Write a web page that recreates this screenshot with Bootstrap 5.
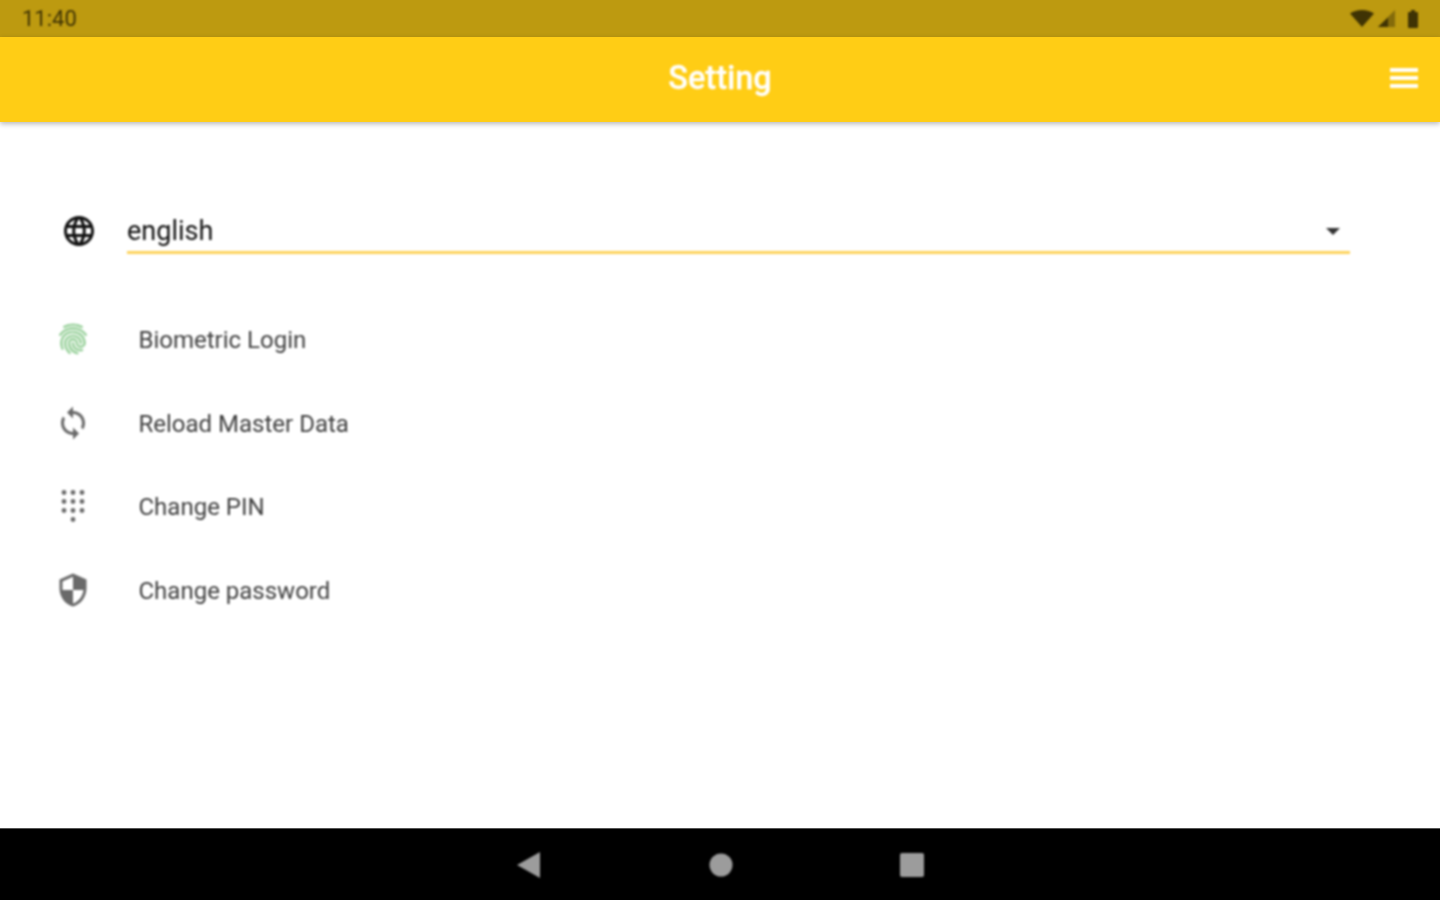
<!DOCTYPE html>
<html lang="en">
<head>
<meta charset="UTF-8">
<meta name="viewport" content="width=device-width, initial-scale=1.0">
<title>Setting</title>
<link href="https://cdn.jsdelivr.net/npm/bootstrap@5.3.3/dist/css/bootstrap.min.css" rel="stylesheet"/>
<style>
  body { font-family: Roboto, "Liberation Sans", sans-serif; background: #fff; }
  .screen { height: 900px; overflow: hidden; }
  .soft { filter: blur(0.8px); }

  /* android status bar */
  .status-bar { height: 37px; background: #bd9a10; padding: 0 22px 0 22px; color: #3f3304; font-size: 22px; }
  .status-icons svg { display: block; fill: #3f3304; }
  .battery-icon { margin-left: 13px; }

  /* yellow app bar */
  .app-bar { height: 85px; background: #ffcd15; padding: 0 0 2px 0; box-shadow: 0 2px 5px rgba(0,0,0,.28); z-index: 2; }
  .app-title { font-size: 32.5px; font-weight: 500; color: #fff; line-height: 1; -webkit-text-stroke: .3px #fff; }
  .menu-btn { right: 22px; top: 31px; width: 28px; }
  .menu-btn span { display: block; height: 4px; background: #fff; margin-bottom: 4px; }

  .content { flex: 1 1 auto; background: #fff; padding-top: 86px; }

  /* language dropdown */
  .lang-row { padding: 0 90px 0 61px; margin-bottom: 44px; }
  .lang-row svg { width: 36px; height: 36px; fill: #111; margin-right: 30px; flex: none; }
  .lang-select { height: 46px; border-bottom: 3px solid #fdd35c; color: #111; font-size: 27px; padding: 4px 10px 0 0; }
  .caret { width: 0; height: 0; border-left: 7px solid transparent; border-right: 7px solid transparent; border-top: 7px solid #333; }

  /* settings list */
  .setting-item { height: 83.7px; padding: 0 0 0 54.5px; border: 0; background: transparent; font-size: 24px; color: #404040; }
  .setting-item svg { width: 36px; height: 36px; fill: #6a6a6a; margin: 0 48px 2px 0; flex: none; }
  .setting-item svg.finger { fill: #81c784; stroke: #a5d6a7; stroke-width: .7; }

  /* android nav bar */
  .nav-keys { height: 72px; background: #000; padding-top: 1px; border-top: 1px solid #555; }
  .nav-keys svg { display: block; fill: #9c9c9c; }
  .key-home { margin-left: 168px; }
  .key-recent { margin-left: 167px; }
</style>
</head>
<body>
<div class="screen d-flex flex-column">

  <div class="status-bar d-flex align-items-center justify-content-between">
    <span class="soft">11:40</span>
    <div class="status-icons d-flex align-items-center soft">
      <svg width="24" height="17" viewBox="0 0 24 17"><path d="M0 3.500C3.200 1.200 7.300 0 12 0s8.800 1.200 12 3.500L12 17z"/></svg>
      <svg class="ms-1" width="17" height="17" viewBox="0 0 17 17"><path d="M17 0v17H0z" opacity=".45"/><path d="M10 7.500V17H0z"/></svg>
      <svg class="battery-icon" width="10" height="18" viewBox="0 0 10 18"><path d="M3 0h4v2h2a1 1 0 0 1 1 1v14a1 1 0 0 1-1 1H1a1 1 0 0 1-1-1V3a1 1 0 0 1 1-1h2z"/></svg>
    </div>
  </div>

  <nav class="app-bar navbar justify-content-center position-relative">
    <span class="app-title soft">Setting</span>
    <div class="menu-btn position-absolute soft"><span></span><span></span><span></span></div>
  </nav>

  <main class="content soft">
    <div class="lang-row d-flex align-items-center">
      <svg viewBox="0 0 24 24"><path d="M11.990 2C6.470 2 2 6.480 2 12s4.470 10 9.990 10C17.520 22 22 17.520 22 12S17.520 2 11.990 2zm6.930 6h-2.950c-.32-1.250-.78-2.450-1.380-3.560 1.840.63 3.370 1.910 4.330 3.560zM12 4.040c.83 1.200 1.480 2.530 1.910 3.960h-3.820c.43-1.430 1.080-2.760 1.910-3.960zM4.260 14C4.100 13.360 4 12.690 4 12s.1-1.360.26-2h3.380c-.08.66-.14 1.320-.14 2 0 .68.06 1.340.14 2H4.260zm.82 2h2.950c.32 1.250.78 2.450 1.380 3.560-1.840-.63-3.370-1.900-4.330-3.560zm2.950-8H5.080c.96-1.660 2.490-2.930 4.330-3.560C8.810 5.550 8.350 6.750 8.030 8zM12 19.960c-.83-1.200-1.480-2.530-1.910-3.960h3.820c-.43 1.430-1.080 2.760-1.910 3.960zM14.340 14H9.660c-.09-.66-.16-1.320-.16-2 0-.68.07-1.350.16-2h4.680c.09.65.16 1.320.16 2 0 .68-.07 1.340-.16 2zm.25 5.560c.6-1.110 1.060-2.310 1.380-3.560h2.950c-.96 1.650-2.490 2.930-4.330 3.560zM16.360 14c.08-.66.14-1.320.14-2 0-.68-.06-1.340-.14-2h3.380c.16.64.26 1.310.26 2s-.1 1.360-.26 2h-3.380z"/></svg>
      <div class="lang-select flex-grow-1 d-flex align-items-center justify-content-between">
        <span>english</span>
        <span class="caret"></span>
      </div>
    </div>

    <div class="list-group list-group-flush">
      <div class="list-group-item setting-item d-flex align-items-center">
        <svg class="finger" viewBox="0 0 24 24"><path d="M17.810 4.470c-.08 0-.16-.02-.23-.06C15.660 3.420 14 3 12.010 3c-1.980 0-3.860.47-5.570 1.410-.24.13-.54.04-.68-.2-.13-.24-.04-.55.2-.68C7.820 2.520 9.860 2 12.010 2c2.130 0 3.990.47 6.030 1.520.25.13.34.43.21.67-.09.18-.26.28-.44.28zM3.500 9.720c-.1 0-.2-.03-.29-.09-.23-.16-.28-.47-.12-.7.99-1.400 2.250-2.500 3.750-3.270C9.980 4.040 14 4.030 17.150 5.650c1.500.77 2.760 1.860 3.750 3.250.16.22.11.54-.12.7-.23.16-.54.11-.7-.12-.9-1.260-2.040-2.250-3.390-2.940-2.870-1.470-6.540-1.470-9.400.01-1.360.7-2.500 1.700-3.400 2.960-.08.14-.23.21-.39.21zm6.250 12.070c-.13 0-.26-.05-.35-.15-.87-.87-1.340-1.430-2.010-2.640-.69-1.230-1.050-2.730-1.050-4.340 0-2.970 2.540-5.390 5.660-5.390s5.660 2.420 5.660 5.390c0 .28-.22.5-.5.5s-.5-.22-.5-.5c0-2.420-2.090-4.390-4.660-4.390s-4.660 1.970-4.660 4.390c0 1.440.32 2.770.93 3.850.64 1.150 1.080 1.640 1.850 2.420.19.2.19.51 0 .71-.11.1-.24.15-.37.15zm7.170-1.850c-1.190 0-2.240-.3-3.100-.89-1.490-1.010-2.380-2.650-2.380-4.390 0-.28.22-.5.5-.5s.5.22.5.5c0 1.410.72 2.740 1.940 3.560.71.48 1.540.71 2.540.71.24 0 .64-.03 1.040-.1.27-.05.53.13.58.41.05.27-.13.53-.41.58-.57.11-1.070.12-1.210.12zM14.910 22c-.04 0-.09-.01-.13-.02-1.590-.44-2.630-1.030-3.720-2.100-1.400-1.390-2.170-3.240-2.170-5.220 0-1.620 1.380-2.940 3.080-2.940s3.080 1.320 3.080 2.940c0 1.070.93 1.940 2.080 1.940s2.080-.87 2.080-1.940c0-3.770-3.250-6.830-7.250-6.830-2.840 0-5.440 1.580-6.610 4.030-.39.81-.59 1.760-.59 2.800 0 .78.07 2.010.67 3.610.1.26-.03.55-.29.64-.26.1-.55-.04-.64-.29-.49-1.310-.73-2.610-.73-3.960 0-1.200.23-2.290.68-3.240 1.330-2.790 4.280-4.600 7.510-4.600 4.550 0 8.250 3.510 8.250 7.830 0 1.620-1.380 2.940-3.080 2.940s-3.080-1.320-3.080-2.940c0-1.070-.93-1.940-2.080-1.940s-2.080.87-2.080 1.940c0 1.710.66 3.310 1.870 4.510.95.94 1.860 1.460 3.270 1.850.27.07.42.35.35.61-.05.23-.26.38-.47.38z"/></svg>
        <span>Biometric Login</span>
      </div>
      <div class="list-group-item setting-item d-flex align-items-center">
        <svg viewBox="0 0 24 24"><path d="M12 4V1L8 5l4 4V6c3.310 0 6 2.690 6 6 0 1.010-.25 1.970-.7 2.800l1.460 1.460C19.540 15.030 20 13.570 20 12c0-4.420-3.580-8-8-8zm0 14c-3.310 0-6-2.690-6-6 0-1.010.25-1.970.7-2.800L5.240 7.740C4.460 8.970 4 10.430 4 12c0 4.420 3.580 8 8 8v3l4-4-4-4v3z"/></svg>
        <span>Reload Master Data</span>
      </div>
      <div class="list-group-item setting-item d-flex align-items-center">
        <svg viewBox="0 0 24 24"><circle cx="6" cy="3" r="1.600"/><circle cx="12" cy="3" r="1.600"/><circle cx="18" cy="3" r="1.600"/><circle cx="6" cy="9" r="1.600"/><circle cx="12" cy="9" r="1.600"/><circle cx="18" cy="9" r="1.600"/><circle cx="6" cy="15" r="1.600"/><circle cx="12" cy="15" r="1.600"/><circle cx="18" cy="15" r="1.600"/><circle cx="12" cy="21" r="1.600"/></svg>
        <span>Change PIN</span>
      </div>
      <div class="list-group-item setting-item d-flex align-items-center">
        <svg viewBox="0 0 24 24"><path d="M12 1L3 5v6c0 5.550 3.840 10.740 9 12 5.160-1.260 9-6.450 9-12V5l-9-4zm0 10.990h7c-.53 4.120-3.280 7.790-7 9.010V12H5V6.300l7-3.110v8.800z"/></svg>
        <span>Change password</span>
      </div>
    </div>
  </main>

  <footer class="nav-keys position-relative d-flex align-items-center justify-content-center">
    <svg class="soft" width="24" height="26" viewBox="0 0 24 26"><path d="M23 0v26L0 13z"/></svg>
    <svg class="key-home soft" width="24" height="24" viewBox="0 0 24 24"><circle cx="12" cy="12" r="11.500"/></svg>
    <svg class="key-recent soft" width="24" height="24" viewBox="0 0 24 24"><rect width="24" height="24" rx="2"/></svg>
  </footer>
</div>
<script src="https://cdn.jsdelivr.net/npm/bootstrap@5.3.3/dist/js/bootstrap.bundle.min.js"></script>
</body>
</html>
